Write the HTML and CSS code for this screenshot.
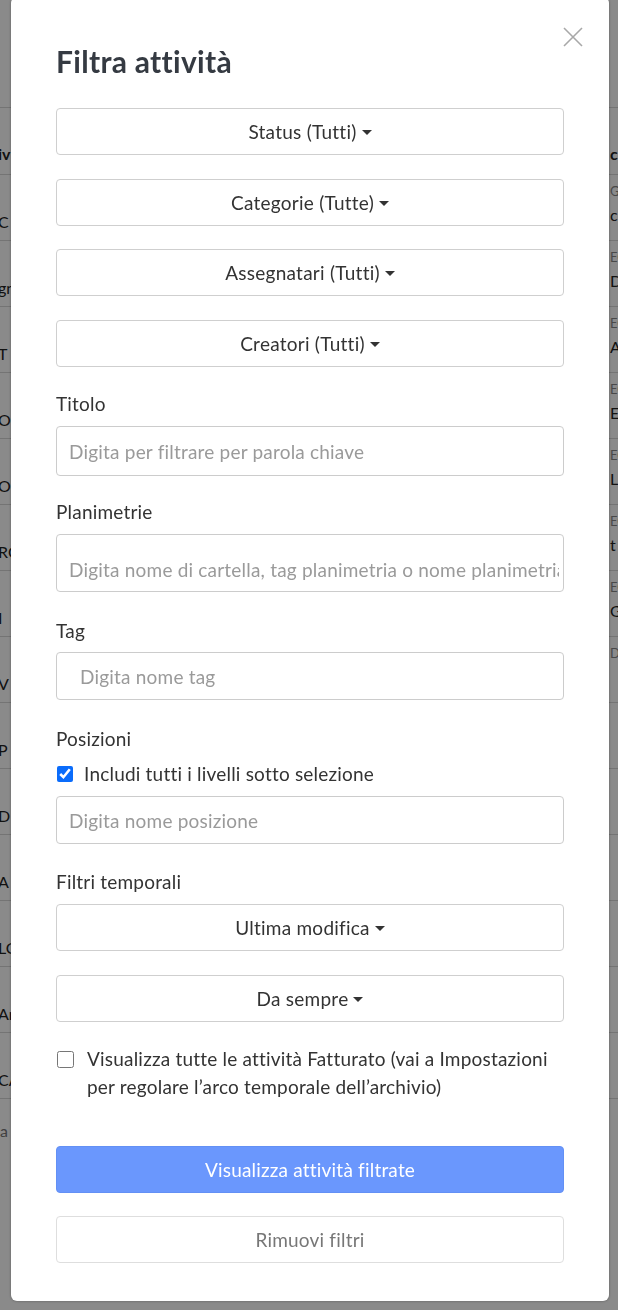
FILE: index.html
```html
<!DOCTYPE html>
<html lang="it">
<head>
<meta charset="utf-8">
<title>Filtra attività</title>
<link rel="stylesheet" href="styles.css">
</head>
<body>
<div class="page">
  <div class="topbar"></div>
  <div class="trow thead"><span class="lf b">iv</span><span class="rf"><span class="main b">c</span></span></div>
  <div class="trow"><span class="lf">C</span><span class="rf"><span class="sub">GI</span><span class="main">c</span></span></div>
  <div class="trow"><span class="lf">gn</span><span class="rf"><span class="sub">EO</span><span class="main">D</span></span></div>
  <div class="trow"><span class="lf">T S</span><span class="rf"><span class="sub">EO</span><span class="main">A</span></span></div>
  <div class="trow"><span class="lf">O L</span><span class="rf"><span class="sub">EO</span><span class="main">E</span></span></div>
  <div class="trow"><span class="lf">O</span><span class="rf"><span class="sub">EO</span><span class="main">L</span></span></div>
  <div class="trow"><span class="lf">RO</span><span class="rf"><span class="sub">EO</span><span class="main">t</span></span></div>
  <div class="trow"><span class="lf">I</span><span class="rf"><span class="sub">EO</span><span class="main">G</span></span></div>
  <div class="trow"><span class="lf">V</span><span class="rf"><span class="sub">D</span></span></div>
  <div class="trow"><span class="lf">P</span></div>
  <div class="trow"><span class="lf">D</span></div>
  <div class="trow"><span class="lf">A</span></div>
  <div class="trow"><span class="lf">LO</span></div>
  <div class="trow"><span class="lf">Ar</span></div>
  <div class="trow"><span class="lf">CA</span></div>
  <div class="tfoot"><span class="lf muted">a a</span></div>
</div>

<div class="backdrop">
  <div class="modal">
    <div class="modal-head">
      <h1 class="title">Filtra attività</h1>
      <button class="close" aria-label="Chiudi">
        <svg viewBox="0 0 20 20" width="20" height="20"><path d="M1 1 L19 19 M19 1 L1 19" stroke="#a8a8a8" stroke-width="1.6" fill="none"/></svg>
      </button>
    </div>

    <div class="dd-list">
      <button class="dd">Status (Tutti)<span class="caret"></span></button>
      <button class="dd">Categorie (Tutte)<span class="caret"></span></button>
      <button class="dd">Assegnatari (Tutti)<span class="caret"></span></button>
      <button class="dd">Creatori (Tutti)<span class="caret"></span></button>
    </div>

    <div class="group g-titolo">
      <label class="lbl">Titolo</label>
      <input class="field" type="text" placeholder="Digita per filtrare per parola chiave">
    </div>

    <div class="group g-plan">
      <label class="lbl">Planimetrie</label>
      <input class="field field-plan" type="text" placeholder="Digita nome di cartella, tag planimetria o nome planimetria">
    </div>

    <div class="group g-tag">
      <label class="lbl lbl-tight">Tag</label>
      <input class="field field-tag" type="text" placeholder="Digita nome tag">
    </div>

    <div class="group g-pos">
      <label class="lbl lbl-tight">Posizioni</label>
      <label class="check"><input type="checkbox" class="cb" checked><span>Includi tutti i livelli sotto selezione</span></label>
      <input class="field field-pos" type="text" placeholder="Digita nome posizione">
    </div>

    <div class="group g-time">
      <label class="lbl">Filtri temporali</label>
      <div class="dd-list">
        <button class="dd">Ultima modifica<span class="caret"></span></button>
        <button class="dd dd-gap">Da sempre<span class="caret"></span></button>
      </div>
    </div>

    <label class="check check-multi"><input type="checkbox" class="cb cb2"><span>Visualizza tutte le attività Fatturato (vai a Impostazioni per regolare l’arco temporale dell’archivio)</span></label>

    <button class="btn-primary">Visualizza attività filtrate</button>
    <button class="btn-light">Rimuovi filtri</button>
  </div>
</div>
</body>
</html>
```

FILE: styles.css
```css
* { box-sizing: border-box; }

html, body {
  margin: 0;
  padding: 0;
  width: 618px;
  height: 1310px;
  overflow: hidden;
}

body {
  font-family: Lato, "Open Sans", "Liberation Sans", sans-serif;
  background: #ffffff;
  color: #333;
}

/* ---------- background page (behind the modal) ---------- */
.page {
  width: 618px;
  overflow: hidden;
}

.topbar {
  height: 108px;
  border-bottom: 1px solid #d6d6d6;
}

.trow {
  display: grid;
  grid-template-columns: 610px 8px;
  height: 66px;
  border-bottom: 1px solid #d6d6d6;
  font-size: 16px;
  color: #222;
}

.thead {
  height: 67px;
  align-items: end;
  padding-bottom: 8px;
}

.trow .lf {
  padding-top: 35px;
  line-height: 24px;
  margin-left: -2px;
  white-space: nowrap;
}

.thead .lf { padding-top: 0; }

.rf {
  display: flex;
  flex-direction: column;
  white-space: nowrap;
  overflow: hidden;
}

.rf .sub {
  font-size: 13px;
  line-height: 18px;
  margin-top: 7px;
  color: #888;
}

.rf .main {
  line-height: 24px;
  margin-top: 3px;
}

.thead .rf .main { margin-top: 0; }

.b { font-weight: 700; }

.tfoot {
  height: 60px;
  font-size: 16px;
  padding-top: 22px;
}

.muted { color: #777; }

/* ---------- overlay + modal ---------- */
.backdrop {
  position: fixed;
  inset: 0;
  background: rgba(0, 0, 0, 0.46);
  overflow: hidden;
}

.modal {
  width: 598px;
  margin: -3px 0 0 11px;
  background: #fff;
  border-radius: 6px;
  padding: 30px 45px 38px 45px;
  box-shadow: 0 0 3px rgba(0, 0, 0, 0.35);
}

.modal-head {
  display: flex;
  justify-content: space-between;
  align-items: flex-start;
}

.title {
  margin: 17px 0 0 0;
  font-size: 30px;
  line-height: 35px;
  letter-spacing: 0.3px;
  font-weight: 700;
  color: #353a42;
}

.close {
  width: 20px;
  height: 20px;
  padding: 0;
  margin: 0 -19px 0 0;
  border: 0;
  background: none;
  display: block;
}

.close svg { display: block; }

.dd-list {
  display: flex;
  flex-direction: column;
  gap: 23.5px;
}

.modal-head + .dd-list { margin-top: 29px; }

.dd {
  display: flex;
  align-items: center;
  justify-content: center;
  width: 100%;
  height: 47px;
  margin: 0;
  padding: 0 12px;
  background: #fff;
  border: 1px solid #cfcfcf;
  border-radius: 4px;
  font-family: Lato, "Open Sans", "Liberation Sans", sans-serif;
  font-size: 19px;
  letter-spacing: 0.25px;
  color: #333;
}

.dd-gap { margin-top: 0.5px; }

.caret {
  display: inline-block;
  width: 0;
  height: 0;
  margin-left: 5px;
  margin-top: 2px;
  border-top: 5px solid #333;
  border-left: 5px solid transparent;
  border-right: 5px solid transparent;
}

.group { display: flex; flex-direction: column; }

.g-titolo { margin-top: 23.5px; }
.g-plan { margin-top: 22px; }
.g-tag { margin-top: 25px; }
.g-pos { margin-top: 25px; }
.g-time { margin-top: 24px; }

.lbl {
  display: block;
  font-size: 19px;
  letter-spacing: 0.2px;
  line-height: 27px;
  color: #333;
  margin-bottom: 9px;
}

.lbl-tight { margin-bottom: 8px; }

.field {
  display: block;
  width: 100%;
  height: 50px;
  margin: 0;
  padding: 0 4px 0 12px;
  border: 1px solid #cccccc;
  border-radius: 4px;
  background: #fff;
  font-family: Lato, "Open Sans", "Liberation Sans", sans-serif;
  font-size: 19px;
  letter-spacing: 0.2px;
  color: #333;
  outline: none;
}

.field::placeholder { color: #9a9a9a; opacity: 1; }

.field-plan {
  height: 58px;
  padding-top: 12px;
}

.field-tag {
  height: 48px;
  padding-left: 23px;
}

.field-pos {
  height: 48px;
  margin-top: 9px;
}

.check {
  display: flex;
  align-items: center;
  gap: 11px;
  font-size: 19px;
  letter-spacing: 0.2px;
  line-height: 27px;
  color: #333;
  padding-left: 1px;
}

.cb {
  width: 16px;
  height: 16px;
  margin: 0;
  flex: none;
  accent-color: #0a6cfb;
}

.check-multi {
  align-items: flex-start;
  margin-top: 23px;
  line-height: 28px;
  gap: 13px;
}

.cb2 {
  width: 17px;
  height: 17px;
  margin-top: 6px;
}

.btn-primary,
.btn-light {
  display: block;
  width: 100%;
  height: 47px;
  margin: 0;
  border-radius: 4px;
  font-family: Lato, "Open Sans", "Liberation Sans", sans-serif;
  font-size: 19px;
  letter-spacing: 0.2px;
  text-align: center;
}

.btn-primary {
  margin-top: 45px;
  background: #6a97fd;
  border: 1px solid #6390f5;
  color: #fff;
}

.btn-light {
  margin-top: 23px;
  background: #fff;
  border: 1px solid #dedede;
  color: #777;
}
```
